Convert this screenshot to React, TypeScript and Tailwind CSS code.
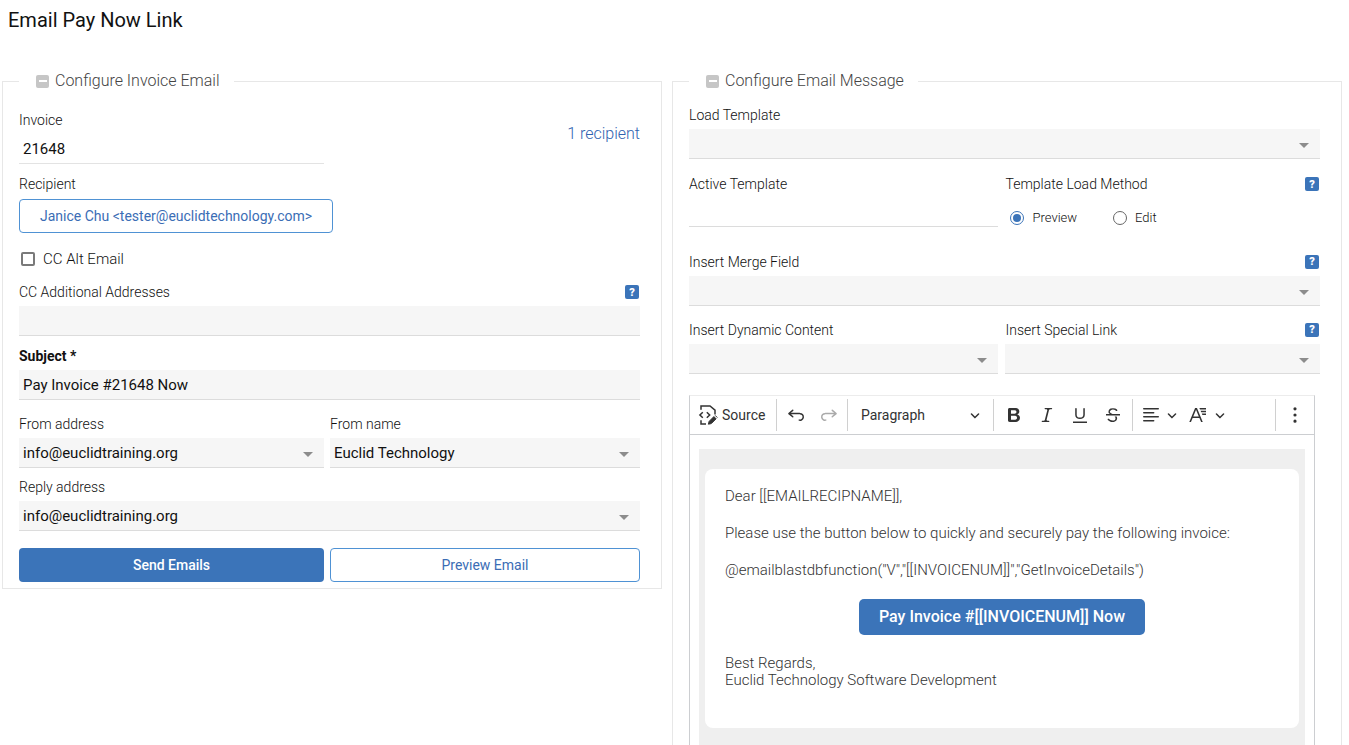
import type { ReactNode } from "react"

type SelectFieldProps = {
  id: string
  label: string
  value?: string
  help?: boolean
}

const icons = {
  undo: "m5.042 9.367 2.189 1.837a.75.75 0 0 1-.965 1.149l-3.788-3.18a.747.747 0 0 1-.21-.284.75.75 0 0 1 .17-.945L6.23 4.762a.75.75 0 1 1 .964 1.15L4.863 7.866h8.917A.75.75 0 0 1 14 7.9a4 4 0 1 1-1.477 7.718l.344-1.489a2.5 2.5 0 1 0 1.094-4.73l.008-.032H5.042z",
  redo: "m14.958 9.367-2.189 1.837a.75.75 0 0 0 .965 1.149l3.788-3.18a.747.747 0 0 0 .21-.284.75.75 0 0 0-.17-.945L13.77 4.762a.75.75 0 1 0-.964 1.15l2.331 1.955H6.22A.75.75 0 0 0 6 7.9a4 4 0 1 0 1.477 7.718l-.344-1.489A2.5 2.5 0 1 1 6.039 9.4l-.008-.032h8.927z",
  bold: "M10.187 17H5.773c-.637 0-1.092-.138-1.364-.415-.273-.277-.409-.718-.409-1.323V4.738c0-.617.14-1.062.419-1.332.279-.27.73-.406 1.354-.406h4.68c.69 0 1.288.041 1.793.124.506.083.96.242 1.36.478.341.197.644.447.906.75a3.262 3.262 0 0 1 .808 2.162c0 1.401-.722 2.426-2.167 3.075C15.05 10.175 16 11.315 16 13.01a3.756 3.756 0 0 1-2.296 3.504 6.1 6.1 0 0 1-1.517.377c-.571.073-1.238.11-2 .11zm-.217-6.217H7v4.087h3.069c1.977 0 2.965-.69 2.965-2.072 0-.707-.256-1.22-.768-1.537-.512-.319-1.277-.478-2.296-.478zM7 5.13v3.619h2.606c.729 0 1.292-.067 1.69-.2a1.6 1.6 0 0 0 .91-.765c.165-.267.247-.566.247-.897 0-.707-.26-1.176-.778-1.409-.519-.232-1.31-.348-2.375-.348H7z",
  italic: "m9.586 14.633.021.004c-.036.335.095.655.393.962.082.083.173.15.274.201h1.474a.6.6 0 1 1 0 1.2H5.304a.6.6 0 0 1 0-1.2h1.15c.474-.07.809-.182 1.005-.334.157-.122.291-.32.404-.597l2.416-9.55a1.053 1.053 0 0 0-.281-.823 1.12 1.12 0 0 0-.442-.296H8.15a.6.6 0 0 1 0-1.2h6.443a.6.6 0 1 1 0 1.2h-1.195c-.376.056-.65.155-.823.296-.215.175-.423.439-.623.79l-2.366 9.347z",
  underline: "M3 18v-1.5h14V18H3zm2.2-8V3.6c0-.4.4-.6.8-.6.3 0 .7.2.7.6v6.2c0 2 1.3 2.8 3.2 2.8 1.9 0 3.4-.9 3.4-2.9V3.6c0-.3.4-.5.8-.5.3 0 .7.2.7.5V10c0 2.7-2.2 4-4.9 4-2.6 0-4.7-1.2-4.7-4z",
  strike: "M7 16.4c-.8-.4-1.5-.9-2.2-1.5a.6.6 0 0 1-.2-.5l.3-.6h1c1 1.2 2.1 1.7 3.7 1.7 1 0 1.8-.3 2.3-.6.6-.4.6-1.2.6-1.3.2-1.2-.9-2.1-.9-2.1h2.1c.3.7.4 1.2.4 1.7v.8l-.6 1.2c-.6.8-1.1 1-1.6 1.2a6 6 0 0 1-2.4.6c-1 0-1.8-.3-2.5-.6zM6.8 9 6 8.3c-.4-.5-.5-.8-.5-1.6 0-.7.1-1.3.5-1.8.4-.6 1-1 1.6-1.3a6.3 6.3 0 0 1 4.7 0 4 4 0 0 1 1.7 1l.3.7c0 .1.2.4-.2.7-.4.2-.9.1-1 0a3 3 0 0 0-1.2-1c-.4-.2-1-.3-2-.4-.7 0-1.4.2-2 .6-.8.6-1 .8-1 1.5 0 .8.5 1 1.2 1.5.6.4 1.1.7 1.9 1H6.8zM3 10.5V9h14v1.5H3z",
  align: "M2 3.75c0 .414.336.75.75.75h14.5a.75.75 0 1 0 0-1.5H2.75a.75.75 0 0 0-.75.75zm0 8c0 .414.336.75.75.75h14.5a.75.75 0 1 0 0-1.5H2.75a.75.75 0 0 0-.75.75zm0 4c0 .414.336.75.75.75h9.929a.75.75 0 1 0 0-1.5H2.75a.75.75 0 0 0-.75.75zm0-8c0 .414.336.75.75.75h9.929a.75.75 0 1 0 0-1.5H2.75a.75.75 0 0 0-.75.75z",
  fontSize: "M9.816 11.5 7.038 4.785 4.261 11.5h5.555Zm.62 1.5H3.641l-1.666 4.028H.312l5.789-14h1.875l5.789 14h-1.663L10.436 13ZM10.4 3H17v1.4h-6zM11.6 5.8H17v1.4h-4.8zM12.8 8.6H17V10h-3.6z",
  more: "M10 2.2a1.6 1.6 0 1 1 0 3.2 1.6 1.6 0 0 1 0-3.2zm0 6.2a1.6 1.6 0 1 1 0 3.2 1.6 1.6 0 0 1 0-3.2zm0 6.2a1.6 1.6 0 1 1 0 3.2 1.6 1.6 0 0 1 0-3.2z",
}

const Icon = ({ path }: { path: string }) => (
  <svg viewBox="0 0 20 20" className="h-5 w-5 fill-current" aria-hidden="true">
    <path d={path} />
  </svg>
)

const SourceIcon = () => (
  <svg viewBox="0 0 20 20" className="h-5 w-5 fill-none stroke-current" strokeWidth="1.5" aria-hidden="true">
    <path d="M3 4.8V1h9l5 4.2v4.3M3 15.2V19h5" />
    <path d="M4.8 7.2 1.9 10l2.9 2.8M8.8 7.2l2.9 2.8-2.9 2.8" />
    <path d="m10.4 19.2.7-2.8 4.8-4.8 2.2 2.2-4.8 4.8zM17.2 10.4l2.2 2.2" className="fill-current" strokeWidth="1" />
  </svg>
)

const Chevron = () => (
  <svg viewBox="0 0 10 10" className="h-[10px] w-[10px] fill-current" aria-hidden="true">
    <path d="M.941 4.523a.75.75 0 1 1 1.06-1.06l3.006 3.005 3.005-3.005a.75.75 0 1 1 1.06 1.06l-3.549 3.55a.75.75 0 0 1-1.168-.136L.941 4.523z" />
  </svg>
)

const HelpButton = () => (
  <button
    type="button"
    aria-label="Help"
    className="flex h-[14px] w-[14px] items-center justify-center rounded-xs bg-[#3b74b9] text-[11px] leading-none font-black text-white"
  >
    ?
  </button>
)

const Panel = ({ title, children }: { title: string; children: ReactNode }) => (
  <fieldset className="min-w-0 border border-[#e7e7e7] pr-[21px] pl-4">
    <legend className="flex h-6 items-center gap-[6px] pr-[14px] pl-[17px] text-base font-light text-[#444]">
      <button type="button" aria-label="Collapse" className="flex h-[13px] w-[13px] items-center justify-center rounded-xs bg-[#c6c6c6]">
        <span className="h-[2px] w-2 bg-white" />
      </button>
      {title}
    </legend>
    {children}
  </fieldset>
)

const FieldLabel = ({ id, label, help }: { id: string; label: string; help?: boolean }) => (
  <div className="mb-1 flex h-5 items-center justify-between pr-px">
    <label htmlFor={id} className="text-sm font-light">
      {label}
    </label>
    {help && <HelpButton />}
  </div>
)

const SelectField = ({ id, label, value = "", help }: SelectFieldProps) => (
  <div className="min-w-0">
    <FieldLabel id={id} label={label} help={help} />
    <div className="relative">
      <select
        id={id}
        defaultValue={value}
        className="h-[30px] w-full appearance-none border-b border-[#dcdcdc] bg-[#f6f6f6] px-1 pt-[2px] text-[15px]"
      >
        <option value={value}>{value}</option>
      </select>
      <svg viewBox="0 0 10 5" className="pointer-events-none absolute top-[14px] right-[11px] h-[5px] w-[10px] fill-[#8c8c8c]">
        <path d="M0 0h10L5 5z" />
      </svg>
    </div>
  </div>
)

const ToolButton = ({ path, label }: { path: string; label: string }) => (
  <button type="button" aria-label={label} className="flex h-8 w-[33px] items-center justify-center">
    <Icon path={path} />
  </button>
)

const Separator = () => <span className="h-8 w-px bg-[#d0d0d0]" />

const Toolbar = () => (
  <div className="flex h-[39px] items-center border-b border-[#ccced1] pl-2 text-[#333]">
    <button type="button" className="flex w-[78px] items-center gap-1 text-sm">
      <SourceIcon />
      Source
    </button>
    <Separator />
    <div className="flex w-[70px] justify-center">
      <ToolButton path={icons.undo} label="Undo" />
      <span className="text-[#aaa]">
        <ToolButton path={icons.redo} label="Redo" />
      </span>
    </div>
    <Separator />
    <button type="button" className="flex w-[145px] items-center justify-between px-[13px] text-sm">
      Paragraph
      <Chevron />
    </button>
    <Separator />
    <div className="flex w-[138px] justify-center">
      <ToolButton path={icons.bold} label="Bold" />
      <ToolButton path={icons.italic} label="Italic" />
      <ToolButton path={icons.underline} label="Underline" />
      <ToolButton path={icons.strike} label="Strikethrough" />
    </div>
    <Separator />
    <button type="button" aria-label="Text alignment" className="flex w-12 items-center gap-[6px] pl-2">
      <Icon path={icons.align} />
      <Chevron />
    </button>
    <button type="button" aria-label="Font size" className="flex w-12 items-center gap-[6px] pl-2">
      <Icon path={icons.fontSize} />
      <Chevron />
    </button>
    <div className="ml-auto flex items-center">
      <Separator />
      <button type="button" aria-label="Show more items" className="flex w-[38px] justify-center">
        <Icon path={icons.more} />
      </button>
    </div>
  </div>
)

const InvoicePanel = () => (
  <Panel title="Configure Invoice Email">
    <div className="flex flex-col pt-[17px] pb-[6px]">
      <div className="grid grid-cols-[305fr_310fr] gap-x-[6px]">
        <div>
          <FieldLabel id="invoice" label="Invoice" />
          <input id="invoice" readOnly defaultValue="21648" className="h-[30px] w-full border-b border-[#e3e3e3] px-1 text-[15px]" />
        </div>
        <a href="#recipients" className="mt-3 justify-self-end text-base leading-6 font-light text-[#2f62b0]">
          1 recipient
        </a>
      </div>

      <span className="mt-[10px] text-sm font-light">Recipient</span>
      <button
        type="button"
        className="mt-[5px] h-[34px] self-start rounded-[4px] border border-[#4f92d4] px-5 text-sm text-[#3b6db5]"
      >
        Janice Chu &lt;tester@euclidtechnology.com&gt;
      </button>

      <label className="mt-4 flex h-5 items-center gap-2 pl-[2px] text-[15px] font-light">
        <input type="checkbox" className="h-[14px] w-[14px] appearance-none rounded-xs border-2 border-[#7a7a7a] checked:bg-[#3b74b9]" />
        CC Alt Email
      </label>

      <div className="mt-[13px]">
        <FieldLabel id="cc" label="CC Additional Addresses" help />
        <input id="cc" className="h-[30px] w-full border-b border-[#dcdcdc] bg-[#f6f6f6] px-1 text-[15px]" />
      </div>

      <div className="mt-[10px]">
        <label htmlFor="subject" className="mb-1 block text-sm font-bold">
          Subject *
        </label>
        <input
          id="subject"
          defaultValue="Pay Invoice #21648 Now"
          className="h-[30px] w-full border-b border-[#dcdcdc] bg-[#f6f6f6] px-1 text-[15px]"
        />
      </div>

      <div className="mt-[14px] grid grid-cols-[305fr_310fr] gap-x-[6px]">
        <SelectField id="from-address" label="From address" value="info@euclidtraining.org" />
        <SelectField id="from-name" label="From name" value="Euclid Technology" />
      </div>

      <div className="mt-[9px]">
        <SelectField id="reply-address" label="Reply address" value="info@euclidtraining.org" />
      </div>

      <div className="mt-[17px] grid grid-cols-[305fr_310fr] gap-x-[6px] text-sm">
        <button type="button" className="h-[34px] rounded-[4px] bg-[#3b74b9] font-medium text-white">
          Send Emails
        </button>
        <button type="button" className="h-[34px] rounded-[4px] border border-[#4f92d4] text-[#3b6db5]">
          Preview Email
        </button>
      </div>
    </div>
  </Panel>
)

const RadioOption = ({ label, checked }: { label: string; checked?: boolean }) => (
  <label className="flex items-center gap-2 text-[13px] font-light">
    <span className="grid place-items-center">
      <input
        type="radio"
        name="load-method"
        defaultChecked={checked}
        className="peer col-start-1 row-start-1 h-[14px] w-[14px] appearance-none rounded-full border border-[#666] checked:border-[#3b74b9]"
      />
      <span className="pointer-events-none col-start-1 row-start-1 h-2 w-2 rounded-full peer-checked:bg-[#3b74b9]" />
    </span>
    {label}
  </label>
)

const Editor = () => (
  <div className="mt-[21px] mr-[5px] border border-[#ccced1] border-t-[#ececec]">
    <Toolbar />
    <div className="px-[9px] pt-[14px]">
      <div className="bg-[#efefef] px-[6px] pt-5 pb-10">
        <div className="rounded-lg bg-white px-5 pt-[19px] pb-[39px] text-[15px] leading-[17px] font-light text-[#333]">
          <p className="mb-5">Dear [[EMAILRECIPNAME]],</p>
          <p className="mb-5">Please use the button below to quickly and securely pay the following invoice:</p>
          <p>@emailblastdbfunction("V","[[INVOICENUM]]","GetInvoiceDetails")</p>
          <div className="my-5 flex justify-center">
            <a href="#pay" className="rounded-[5px] bg-[#3b74b9] px-5 py-[10px] text-base leading-4 font-medium text-white">
              Pay Invoice #[[INVOICENUM]] Now
            </a>
          </div>
          <p>
            Best Regards,
            <br />
            Euclid Technology Software Development
          </p>
        </div>
      </div>
    </div>
  </div>
)

const MessagePanel = () => (
  <Panel title="Configure Email Message">
    <div className="pt-3">
      <SelectField id="load-template" label="Load Template" />

      <div className="mt-[15px] grid grid-cols-[309fr_314fr] gap-x-[7px]">
        <div>
          <FieldLabel id="active-template" label="Active Template" />
          <input id="active-template" readOnly className="h-[29px] w-full border-b border-[#dcdcdc]" />
        </div>
        <div role="radiogroup" aria-labelledby="load-method-label">
          <div className="mb-1 flex h-5 items-center justify-between pr-px">
            <span id="load-method-label" className="text-sm font-light">
              Template Load Method
            </span>
            <HelpButton />
          </div>
          <div className="flex gap-9 pt-[10px] pl-[5px]">
            <RadioOption label="Preview" checked />
            <RadioOption label="Edit" />
          </div>
        </div>
      </div>

      <div className="mt-6">
        <SelectField id="merge-field" label="Insert Merge Field" help />
      </div>

      <div className="mt-[14px] grid grid-cols-[309fr_314fr] gap-x-[7px]">
        <SelectField id="dynamic-content" label="Insert Dynamic Content" />
        <SelectField id="special-link" label="Insert Special Link" help />
      </div>

      <Editor />
    </div>
  </Panel>
)

const App = () => (
  <main className="h-screen overflow-hidden bg-white font-['Roboto',sans-serif] text-[#111]">
    <h1 className="px-2 pt-[6px] text-xl leading-7">Email Pay Now Link</h1>
    <div className="mt-[35px] grid grid-cols-[660fr_670fr] items-start gap-x-[10px] pr-[7px] pl-[2px]">
      <InvoicePanel />
      <MessagePanel />
    </div>
  </main>
)

export default App
